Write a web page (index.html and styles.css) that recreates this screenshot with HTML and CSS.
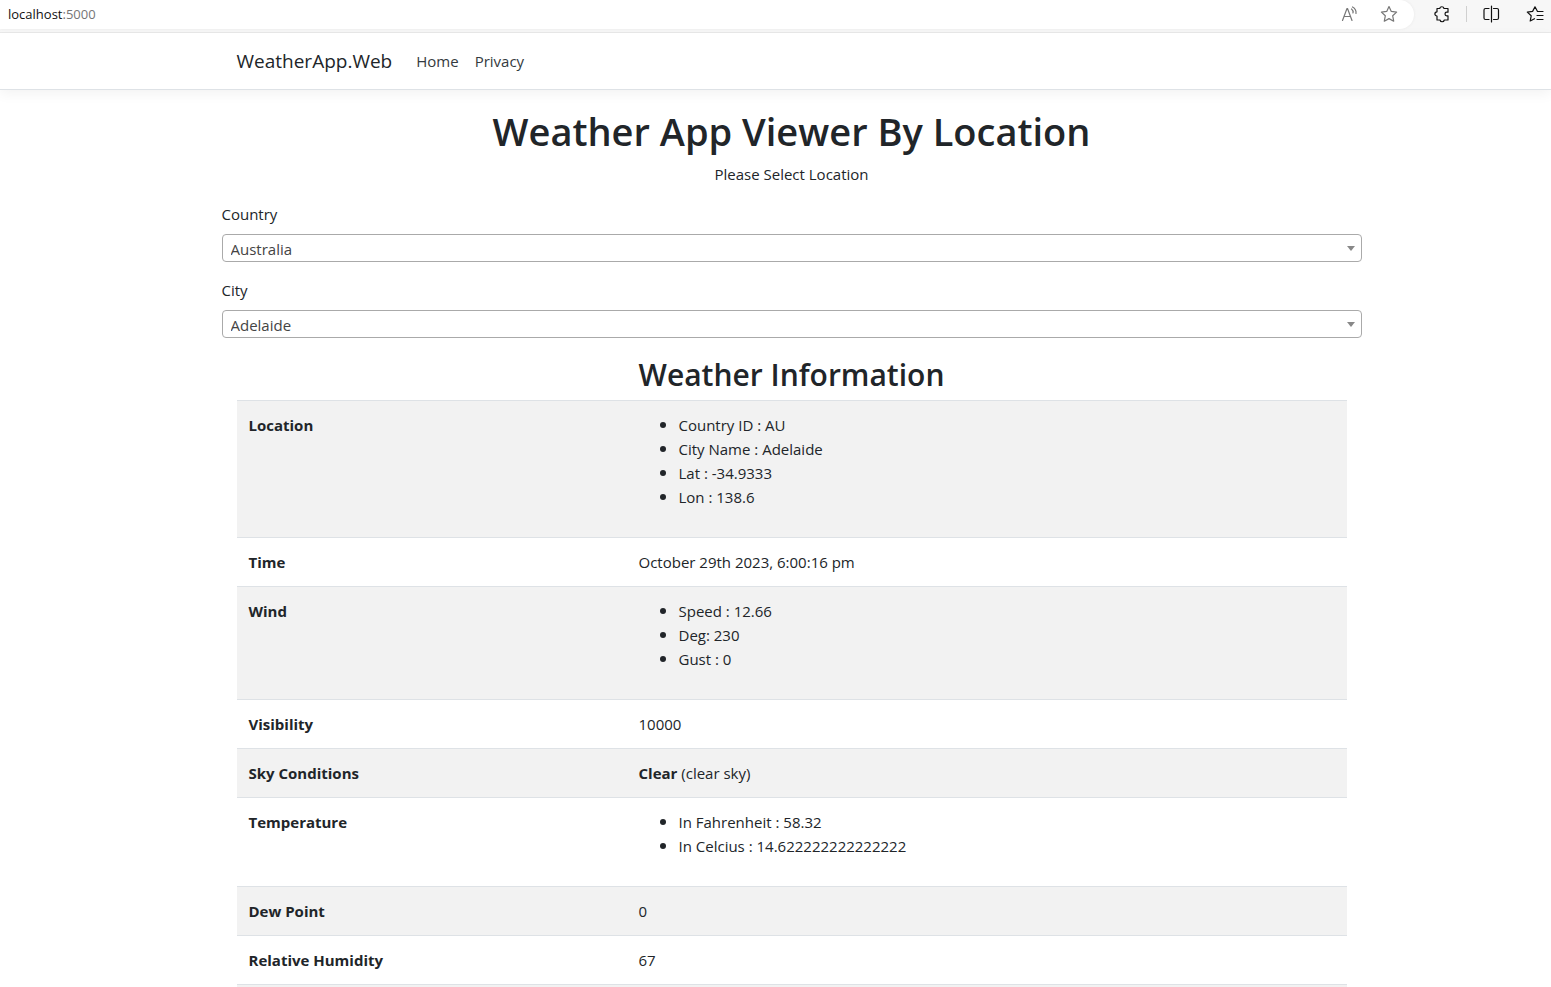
FILE: index.html
```html
<!DOCTYPE html>
<html lang="en">
<head>
<meta charset="utf-8">
<title>WeatherApp.Web</title>
<link rel="stylesheet" href="styles.css">
</head>
<body>
<div class="toolbar">
  <div class="address">
    <div class="url"><span class="host">localhost</span><span class="port">:5000</span></div>
    <button class="tool" aria-label="Read aloud">
      <svg width="18" height="18" viewBox="0 0 18 18"><path d="M2.500 15.500 7 3.500h.5L12 15.500M4.200 11.500h6.200M11.500 4a4 4 0 0 1 1.500 4M12.500 2a6.500 6.500 0 0 1 3.500 6.500"/></svg>
    </button>
    <button class="tool" aria-label="Add to favorites">
      <svg width="18" height="18" viewBox="0 0 18 18"><path d="m9 1.500 2.300 4.900 5.300.7-3.900 3.700 1 5.400L9 13.600l-4.700 2.600 1-5.400L1.400 7.100l5.300-.7z"/></svg>
    </button>
  </div>
  <div class="actions">
    <button class="tool dark" aria-label="Extensions">
      <svg width="18" height="18" viewBox="0 0 18 18"><path d="M4 3.500h2.700a2.200 2.200 0 0 1 4.300 0h4v3.700h-1.200a1.800 1.800 0 0 0 0 3.600H15V15h-3.700a2.200 2.200 0 0 1-4.300 0H4v-4a2.100 2.100 0 0 1 0-4.200z"/></svg>
    </button>
    <span class="divider"></span>
    <button class="tool dark" aria-label="Split screen">
      <svg width="18" height="18" viewBox="0 0 18 18"><path d="M7 3.500H3.500a1.500 1.500 0 0 0-1.500 1.500v8a1.500 1.500 0 0 0 1.500 1.500H7M11.500 3.500h3.500A1.500 1.500 0 0 1 16.500 5v8a1.500 1.500 0 0 1-1.500 1.500h-3.500M9.500 1v16"/></svg>
    </button>
    <button class="tool dark" aria-label="Favorites">
      <svg width="18" height="18" viewBox="0 0 18 18"><path d="M17 6.500h-5.500L9 1.800 6.600 6.400 1.300 7.100l3.900 3.700-1 5.200 4.300-2.300M11 10.500h6M11 14.500h6"/></svg>
    </button>
  </div>
</div>
<header class="site-header">
  <nav class="container nav">
    <a class="brand" href="#">WeatherApp.Web</a>
    <a class="nav-link" href="#">Home</a>
    <a class="nav-link" href="#">Privacy</a>
  </nav>
</header>
<main class="container">
  <h1>Weather App Viewer By Location</h1>
  <p class="lead">Please Select Location</p>
  <div class="field">
    <label for="country">Country</label>
    <div class="select"><select id="country"><option>Australia</option></select></div>
  </div>
  <div class="field">
    <label for="city">City</label>
    <div class="select"><select id="city"><option>Adelaide</option></select></div>
  </div>
  <section class="info">
    <h2>Weather Information</h2>
    <table>
      <tbody>
        <tr><th scope="row">Location</th><td><ul><li>Country ID : AU</li><li>City Name : Adelaide</li><li>Lat : -34.9333</li><li>Lon : 138.6</li></ul></td></tr>
        <tr><th scope="row">Time</th><td>October 29th 2023, 6:00:16 pm</td></tr>
        <tr><th scope="row">Wind</th><td><ul><li>Speed : 12.66</li><li>Deg: 230</li><li>Gust : 0</li></ul></td></tr>
        <tr><th scope="row">Visibility</th><td>10000</td></tr>
        <tr><th scope="row">Sky Conditions</th><td><strong>Clear</strong> (clear sky)</td></tr>
        <tr><th scope="row">Temperature</th><td><ul><li>In Fahrenheit : 58.32</li><li>In Celcius : 14.622222222222222</li></ul></td></tr>
        <tr><th scope="row">Dew Point</th><td>0</td></tr>
        <tr><th scope="row">Relative Humidity</th><td>67</td></tr>
        <tr class="tail"><td colspan="2"></td></tr>
      </tbody>
    </table>
  </section>
</main>
</body>
</html>
```
FILE: styles.css
```css
* { box-sizing: border-box; }
body {
  margin: 0;
  background: #fff;
  color: #212529;
  font: 15px/24px "Segoe UI", "Open Sans", "Noto Sans", sans-serif;
}
.toolbar {
  display: flex;
  height: 33px;
  padding-bottom: 3px;
  background: #f7f7f7;
  border-bottom: 1px solid #e9e9e9;
}
.address {
  flex: 1;
  display: flex;
  align-items: center;
  gap: 22px;
  padding: 0 16px 2px 8px;
  background: #fff;
  border-radius: 0 15px 15px 0;
  box-shadow: 0 0 3px #e8e8e8;
}
.url { flex: 1; font-size: 13px; }
.host { color: #111; }
.port { color: #767676; }
.actions {
  display: flex;
  align-items: center;
  gap: 15px;
  padding: 0 7px 2px 19px;
}
.divider { width: 1px; height: 16px; background: #d0d0d0; }
.divider + .tool { margin-right: 11px; }
.tool {
  display: flex;
  padding: 0;
  border: 0;
  background: none;
  color: #777;
}
.tool.dark { color: #111; }
.tool svg { fill: none; stroke: currentColor; stroke-width: 1.2; stroke-linejoin: round; stroke-linecap: round; }
.site-header {
  padding-left: 32px;
  border-bottom: 1px solid #dee2e6;
  box-shadow: 0 4px 12px rgba(0, 0, 0, .05);
}
.container { width: 100%; max-width: 1140px; margin: 0 auto; }
.nav {
  display: flex;
  align-items: center;
  height: 56px;
  padding: 0 15px;
}
.brand { margin-right: 16px; font-size: 19px; color: #212529; text-decoration: none; }
.nav-link { padding: 8px; color: #343a40; text-decoration: none; }
main.container { max-width: 1172px; padding: 16px 0 0 32px; }
h1, h2 { margin: 0; font-weight: 600; text-align: center; }
h1 { padding-bottom: 6px; font-size: 38px; line-height: 50px; }
h2 { padding-bottom: 4px; font-size: 30px; line-height: 42px; }
.lead { margin: 0 0 16px; text-align: center; }
.field { margin-bottom: 16px; }
.field label { display: block; margin-bottom: 8px; }
.select { position: relative; height: 28px; }
.select::after {
  content: "";
  position: absolute;
  right: 7px;
  top: 12px;
  border: solid transparent;
  border-width: 5px 4px 0;
  border-top-color: #888;
}
select {
  appearance: none;
  width: 100%;
  height: 28px;
  padding: 1px 20px 0 8px;
  border: 1px solid #aaa;
  border-radius: 4px;
  background: #fff;
  color: #444;
  font: inherit;
}
.info { padding: 0 15px; }
table { width: 100%; border-collapse: separate; border-spacing: 0; table-layout: fixed; }
th, td { padding: 12px; border-top: 1px solid #dee2e6; text-align: left; vertical-align: top; }
th { width: 390px; font-weight: 700; }
tr:nth-child(odd) { background: #f2f2f2; }
.tail td { padding: 1px; }
ul { margin: 0 0 16px; padding-left: 21px; list-style: none; }
li { display: flex; align-items: center; gap: 13px; }
li::before {
  content: "";
  width: 6px;
  height: 6px;
  border-radius: 50%;
  background: currentColor;
}
```
